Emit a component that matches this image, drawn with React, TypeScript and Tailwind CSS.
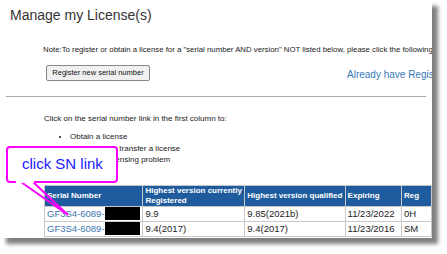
const rows = [
  { sn: "GF3S4-6089-", reg: "9.9", qual: "9.85(2021b)", exp: "11/23/2022", re: "0H" },
  { sn: "GF3S4-6089-", reg: "9.4(2017)", qual: "9.4(2017)", exp: "11/23/2016", re: "SM" },
];

function Callout() {
  return (
    <div className="absolute left-[6px] top-[146px] w-[112px] h-[37px]">
      <svg className="absolute left-0 top-0 overflow-visible" width="140" height="80">
        <path
          d="M15 36 L62 69 M27 36 L62 69"
          stroke="#ff00ff"
          strokeWidth="2"
          fill="none"
        />
      </svg>
      <div className="absolute inset-0 rounded-[4px] border-2 border-[#ff00ff] bg-white flex items-center pl-[14px] text-[15px] text-[#1a1aff]">
        click SN link
      </div>
      <div className="absolute left-[10px] top-[34px] w-[18px] h-[3px] bg-white" />
    </div>
  );
}

export default function App() {
  return (
    <div className="w-[447px] h-[254px] bg-white font-['Liberation_Sans',Arial,sans-serif] relative">
      <div className="w-[432px] h-[238px] bg-white overflow-hidden shadow-[6px_6px_4px_rgba(0,0,0,0.5)] relative">
        <h1 className="pl-[10px] pt-[6px] text-[14px] leading-[18px] text-[#333]">Manage my License(s)</h1>

        <p className="pl-[43px] mt-[21px] text-[7.8px] leading-[10px] text-[#222] whitespace-nowrap">
          Note:To register or obtain a license for a "serial number AND version" NOT listed below, please click the following
        </p>

        <div className="flex items-end mt-[10px] pl-[46px] whitespace-nowrap">
          <button className="h-[16px] w-[104px] shrink-0 border border-[#888] rounded-[2px] bg-[#f0f0f0] text-[7.5px] text-[#111] whitespace-nowrap">
            Register new serial number
          </button>
          <span className="ml-[197px] text-[10px] leading-[12px] text-[#3578b8]">
            Already have Registration
          </span>
        </div>

        <div className="mx-[6px] mt-[15px] h-px bg-[#aaa]" />

        <p className="pl-[44px] mt-[17px] text-[8px] leading-[10px] text-[#222] whitespace-nowrap">
          Click on the serial number link in the first column to:
        </p>
        <ul className="pl-[70px] mt-[7px] text-[8px] leading-[11.5px] text-[#222] list-disc">
          <li>Obtain a license</li>
          <li>Deactivate or transfer a license</li>
          <li>Resolve a licensing problem</li>
        </ul>

        <table className="ml-[44px] mt-[19px] border-collapse text-[9.5px] whitespace-nowrap">
          <thead>
            <tr className="bg-[#1f5c9e] text-white text-[8px] leading-[9.5px] text-left">
              <th className="w-[101px] h-[21px] px-[2px] border border-[#c8c8c8] font-bold">Serial Number</th>
              <th className="w-[103px] px-[2px] border border-[#c8c8c8] font-bold">Highest version currently<br />Registered</th>
              <th className="w-[101px] px-[2px] border border-[#c8c8c8] font-bold">Highest version qualified</th>
              <th className="w-[70px] px-[2px] border border-[#c8c8c8] font-bold">Expiring</th>
              <th className="w-[60px] px-[2px] border border-[#c8c8c8] font-bold">Reg</th>
            </tr>
          </thead>
          <tbody>
            {rows.map((r, i) => (
              <tr key={i} className="h-[15px] leading-[13px] text-[#222]">
                <td className="px-[2px] border border-[#c8c8c8]">
                  <span className="text-[#3a76b0]">{r.sn}</span>
                  <span className="inline-block align-middle w-[35px] h-[13px] bg-black" />
                </td>
                <td className="px-[2px] border border-[#c8c8c8]">{r.reg}</td>
                <td className="px-[2px] border border-[#c8c8c8]">{r.qual}</td>
                <td className="px-[2px] border border-[#c8c8c8]">{r.exp}</td>
                <td className="px-[2px] border border-[#c8c8c8]">{r.re}</td>
              </tr>
            ))}
          </tbody>
        </table>
      </div>
      <Callout />
    </div>
  );
}
